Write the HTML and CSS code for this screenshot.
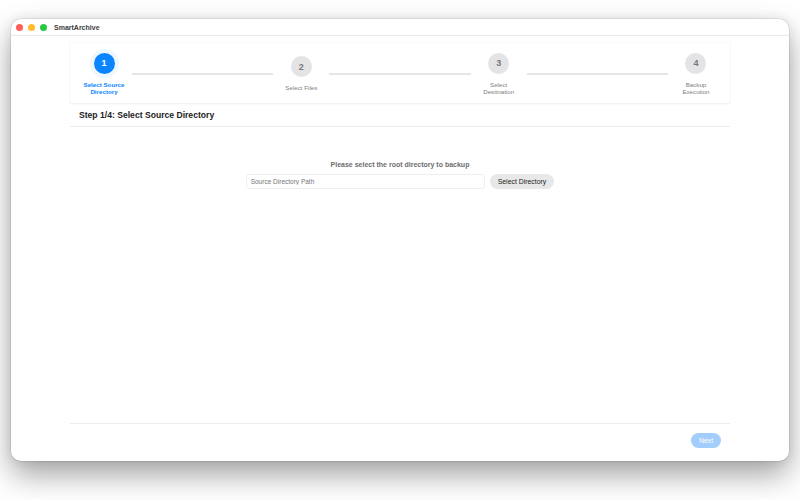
FILE: index.html
```html
<!doctype html>
<html>
  <head>
    <meta charset="utf-8" />
    <title>SmartArchive</title>
    <link rel="stylesheet" href="styles.css">
  </head>
  <body>
    <div class="window">
      <div class="titlebar">
        <div class="lights">
          <span class="light red"></span>
          <span class="light yellow"></span>
          <span class="light green"></span>
        </div>
        <div class="title">SmartArchive</div>
      </div>

      <div class="content">
        <div class="steps">
          <div class="step active">
            <div class="step-circle">1</div>
            <div class="step-label">Select Source Directory</div>
          </div>
          <div class="step-line"></div>
          <div class="step">
            <div class="step-circle">2</div>
            <div class="step-label">Select Files</div>
          </div>
          <div class="step-line"></div>
          <div class="step">
            <div class="step-circle">3</div>
            <div class="step-label">Select Destination</div>
          </div>
          <div class="step-line"></div>
          <div class="step">
            <div class="step-circle">4</div>
            <div class="step-label">Backup Execution</div>
          </div>
        </div>

        <div class="step-header">
          <h2>Step 1/4: Select Source Directory</h2>
        </div>

        <div class="main">
          <div class="prompt">Please select the root directory to backup</div>
          <div class="picker">
            <input class="path-input" type="text" placeholder="Source Directory Path" />
            <button class="button">Select Directory</button>
          </div>
        </div>

        <div class="footer">
          <button class="button primary" disabled>Next</button>
        </div>
      </div>
    </div>
  </body>
</html>
```

FILE: styles.css
```css
:root {
  --blue: #0a84ff;
  --text: #222;
  --muted: #808080;
  --border: #ececec;
}

* {
  box-sizing: border-box;
}

html {
  height: 100%;
  background: #fff;
}

body {
  min-height: 100%;
  margin: 0;
  padding: 19px 11px 0;
  background: #fff;
  font-family: 'Liberation Sans', 'Helvetica', 'Arial', sans-serif;
  color: var(--text);
  -webkit-font-smoothing: antialiased;
}

/* Window */
.window {
  height: 442px;
  display: flex;
  flex-direction: column;
  background: #fff;
  border-radius: 10px;
  box-shadow:
    0 0 0 0.5px rgba(0, 0, 0, 0.14),
    0 14px 30px rgba(0, 0, 0, 0.36),
    0 0 12px rgba(0, 0, 0, 0.08);
}

.titlebar {
  height: 17px;
  flex-shrink: 0;
  display: flex;
  align-items: center;
  padding-left: 4.5px;
  border-bottom: 1px solid #e9e9e9;
}

.lights {
  display: flex;
  gap: 5px;
}

.light {
  width: 7px;
  height: 7px;
  border-radius: 50%;
}

.light.red {
  background: #ff5f57;
}

.light.yellow {
  background: #febc2e;
}

.light.green {
  background: #28c840;
}

.title {
  margin-left: 7.5px;
  font-size: 7px;
  font-weight: 700;
  color: #3c3c3c;
}

/* Content column */
.content {
  flex: 1;
  width: 660px;
  margin: 0 auto;
  padding-top: 7px;
  display: flex;
  flex-direction: column;
}

/* Stepper */
.steps {
  height: 60px;
  padding: 2px 6px 0;
  display: flex;
  align-items: center;
  background: #fff;
  box-shadow:
    0 0 0 0.5px rgba(0, 0, 0, 0.03),
    0 1px 2px rgba(0, 0, 0, 0.05);
}

.step {
  width: 56px;
  flex-shrink: 0;
  display: flex;
  flex-direction: column;
  align-items: center;
}

.step-circle {
  width: 21px;
  height: 21px;
  border-radius: 50%;
  background: #e4e4e6;
  color: #777;
  font-size: 9px;
  font-weight: 700;
  display: flex;
  align-items: center;
  justify-content: center;
}

.step-label {
  width: 44px;
  margin-top: 7px;
  font-size: 6.2px;
  line-height: 7.5px;
  text-align: center;
  color: var(--muted);
}

.step.active .step-circle {
  background: var(--blue);
  color: #fff;
  box-shadow: 0 0 0 4px rgba(10, 132, 255, 0.07);
}

.step.active .step-label {
  color: var(--blue);
  font-weight: 700;
}

.step-line {
  flex: 1;
  height: 1.5px;
  background: #e6e6e6;
}

/* Step header */
.step-header {
  height: 24px;
  padding-left: 9px;
  display: flex;
  align-items: center;
  border-bottom: 1px solid var(--border);
}

.step-header h2 {
  margin: 0;
  font-size: 8.6px;
  font-weight: 700;
  color: #222;
}

/* Main */
.main {
  flex: 1;
  padding-top: 33px;
  display: flex;
  flex-direction: column;
  align-items: center;
}

.prompt {
  font-size: 7px;
  line-height: 9px;
  font-weight: 700;
  color: #6e6e6e;
}

.picker {
  margin-top: 4.5px;
  display: flex;
  gap: 5px;
}

.path-input {
  width: 239px;
  height: 15px;
  margin: 0;
  padding: 0 4px;
  border: 1px solid #efefef;
  border-radius: 3px;
  font-family: inherit;
  font-size: 6.5px;
  color: var(--text);
  outline: none;
}

.path-input::placeholder {
  color: #777;
}

.button {
  height: 15px;
  padding: 0 8px;
  border: none;
  border-radius: 8px;
  background: #e8e8e8;
  color: #222;
  font-family: inherit;
  font-size: 6.9px;
  line-height: 15px;
  cursor: pointer;
}

.button.primary {
  width: 30px;
  padding: 0;
  background: #a3cdfa;
  color: #fff;
}

/* Footer */
.footer {
  height: 38px;
  flex-shrink: 0;
  padding: 9px 9px 0 0;
  display: flex;
  justify-content: flex-end;
  align-items: flex-start;
  border-top: 1px solid var(--border);
}
```
